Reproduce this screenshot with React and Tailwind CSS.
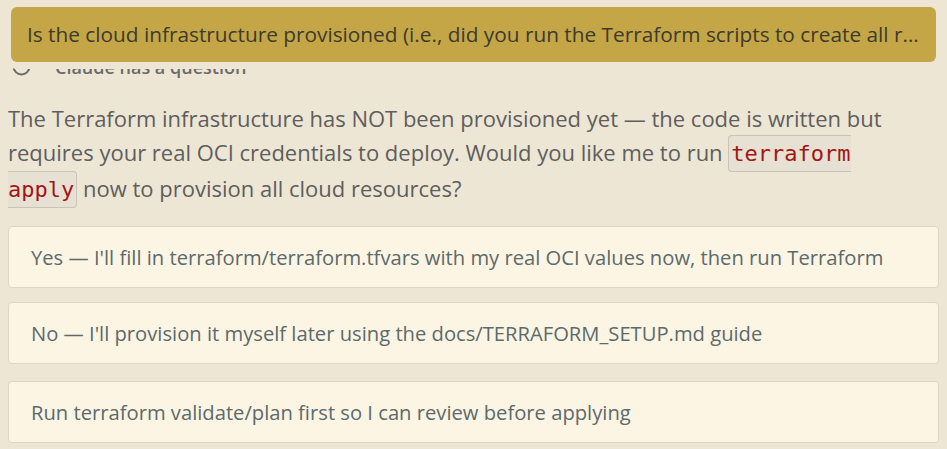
import React from 'react';

const options = [
  "Yes — I'll fill in terraform/terraform.tfvars with my real OCI values now, then run Terraform",
  "No — I'll provision it myself later using the docs/TERRAFORM_SETUP.md guide",
  'Run terraform validate/plan first so I can review before applying',
];

const gaps = ['mt-0', 'mt-[14px]', 'mt-[17px]'];

const Code = ({ children }) => (
  <code className="rounded-[4px] border border-[#c9c4b6] bg-[#e6e1d3] px-[2px] py-[5px] font-['DejaVu_Sans_Mono',monospace] text-[22px] text-[#a31515]">
    {children}
  </code>
);

export default function App() {
  return (
    <div className="relative min-h-screen w-full overflow-hidden bg-[#ede6d4] font-['Open_Sans',sans-serif]">
      {/* tooltip over the header, with a ring of page colour around it */}
      <div className="absolute left-[11px] right-[11px] top-[7px] z-10 flex h-[55px] items-center rounded-[6px] bg-[#c4a646] pl-4 pr-[12px] shadow-[0_0_0_7px_#ede6d4]">
        <p className="truncate text-[20.8px] text-[#3d3a2e]">
          Is the cloud infrastructure provisioned (i.e., did you run the Terraform scripts to create all resources in OCI)?
        </p>
      </div>

      <div className="px-[8px] pt-[54px]">
        {/* header row (mostly hidden) */}
        <div className="flex h-[26px] items-center gap-[24px] pl-[4px] text-[18px] font-semibold text-[#6b6b6b]">
          <svg width="19" height="19" viewBox="0 0 19 19" fill="none" stroke="#6b6b6b" strokeWidth="2" className="-mt-[2px]">
            <circle cx="9.5" cy="9.5" r="8" />
          </svg>
          <span>Claude has a question</span>
        </div>

        <p className="mt-[21px] w-[905px] text-[22px] leading-[34px] text-[#5e5e5e]">
          The Terraform infrastructure has NOT been provisioned yet — the code is written but requires your real OCI
          credentials to deploy. Would you like me to run <Code>terraform apply</Code> now to provision all cloud
          resources?
        </p>

        <div className="mt-[19px] flex flex-col">
          {options.map((o, i) => (
            <div
              key={o}
              className={`${gaps[i]} flex h-[62px] items-center rounded-[4px] border border-[#ddd6c2] bg-[#fcf5e3] px-[22px] text-[20.2px] text-[#5c6a6c]`}
            >
              {o}
            </div>
          ))}
        </div>
      </div>
    </div>
  );
}
